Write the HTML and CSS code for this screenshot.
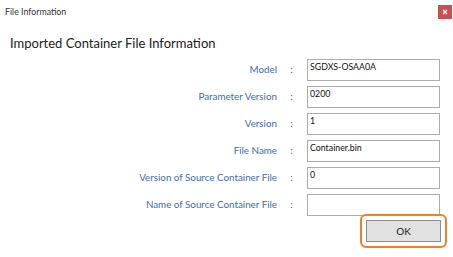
FILE: index.html
```html
<!DOCTYPE html>
<html>
<head>
<meta charset="utf-8">
<link rel="stylesheet" href="styles.css">
</head>
<body>
<div class="window">
  <div class="titlebar">
    <span class="title">File Information</span>
    <button class="close" aria-label="Close">
      <svg width="6" height="6" viewBox="0 0 6 6"><path d="M1 1L5 5M5 1L1 5" stroke="#fff" stroke-width="1.3"/></svg>
    </button>
  </div>
  <h1 class="heading">Imported Container File Information</h1>
  <div class="form">
    <div class="label">Model</div><div class="colon">:</div><div class="box">SGDXS-OSAA0A</div>
    <div class="label">Parameter Version</div><div class="colon">:</div><div class="box">0200</div>
    <div class="label">Version</div><div class="colon">:</div><div class="box">1</div>
    <div class="label">File Name</div><div class="colon">:</div><div class="box">Container.bin</div>
    <div class="label">Version of Source Container File</div><div class="colon">:</div><div class="box">0</div>
    <div class="label">Name of Source Container File</div><div class="colon">:</div><div class="box"></div>
  </div>
  <div class="actions">
    <div class="focus-ring"><button class="ok">OK</button></div>
  </div>
</div>
</body>
</html>
```
FILE: styles.css
```css
html, body {
  margin: 0;
  padding: 0;
  background: #ffffff;
}
.window {
  width: 453px;
  height: 257px;
  font-family: "Lato", "Open Sans", sans-serif;
  color: #222;
}
.titlebar {
  height: 24px;
  display: flex;
  align-items: flex-start;
  justify-content: space-between;
  padding: 5px 1px 0 5px;
  box-sizing: border-box;
}
.title {
  font-size: 8.8px;
  line-height: 14px;
  color: #333;
}
.close {
  width: 14px;
  height: 14px;
  padding: 0;
  border: none;
  background: #c9504e;
  display: flex;
  align-items: center;
  justify-content: center;
}
.heading {
  margin: 10px 0 0 10px;
  font-weight: normal;
  font-size: 13px;
  line-height: 19px;
  color: #222;
}
.form {
  margin-top: 6px;
  display: grid;
  grid-template-columns: 277px 28px 135px;
  grid-auto-rows: 22px;
  row-gap: 5px;
}
.label {
  text-align: right;
  font-size: 9.8px;
  line-height: 21px;
  color: #3d6ea8;
}
.colon {
  text-align: center;
  font-size: 10px;
  line-height: 20px;
  color: #3d6ea8;
  padding-left: 1px;
}
.box {
  margin-left: 2px;
  border: 1px solid #adadad;
  font-size: 8.8px;
  line-height: 13px;
  padding: 0 2px;
  color: #111;
  box-sizing: border-box;
}
.actions {
  display: flex;
  justify-content: flex-end;
  padding-right: 11px;
  margin-top: 4px;
}
.focus-ring {
  border: 2px solid #f0802a;
  border-radius: 6px;
  padding: 4px;
  margin: -6px -5px 0 0;
}
.ok {
  display: block;
  width: 75px;
  height: 22px;
  border: 1px solid #8d8d8d;
  background: #e1e1e1;
  font-family: "Lato", "Open Sans", sans-serif;
  font-size: 10px;
  color: #222;
  padding: 0;
}
```
